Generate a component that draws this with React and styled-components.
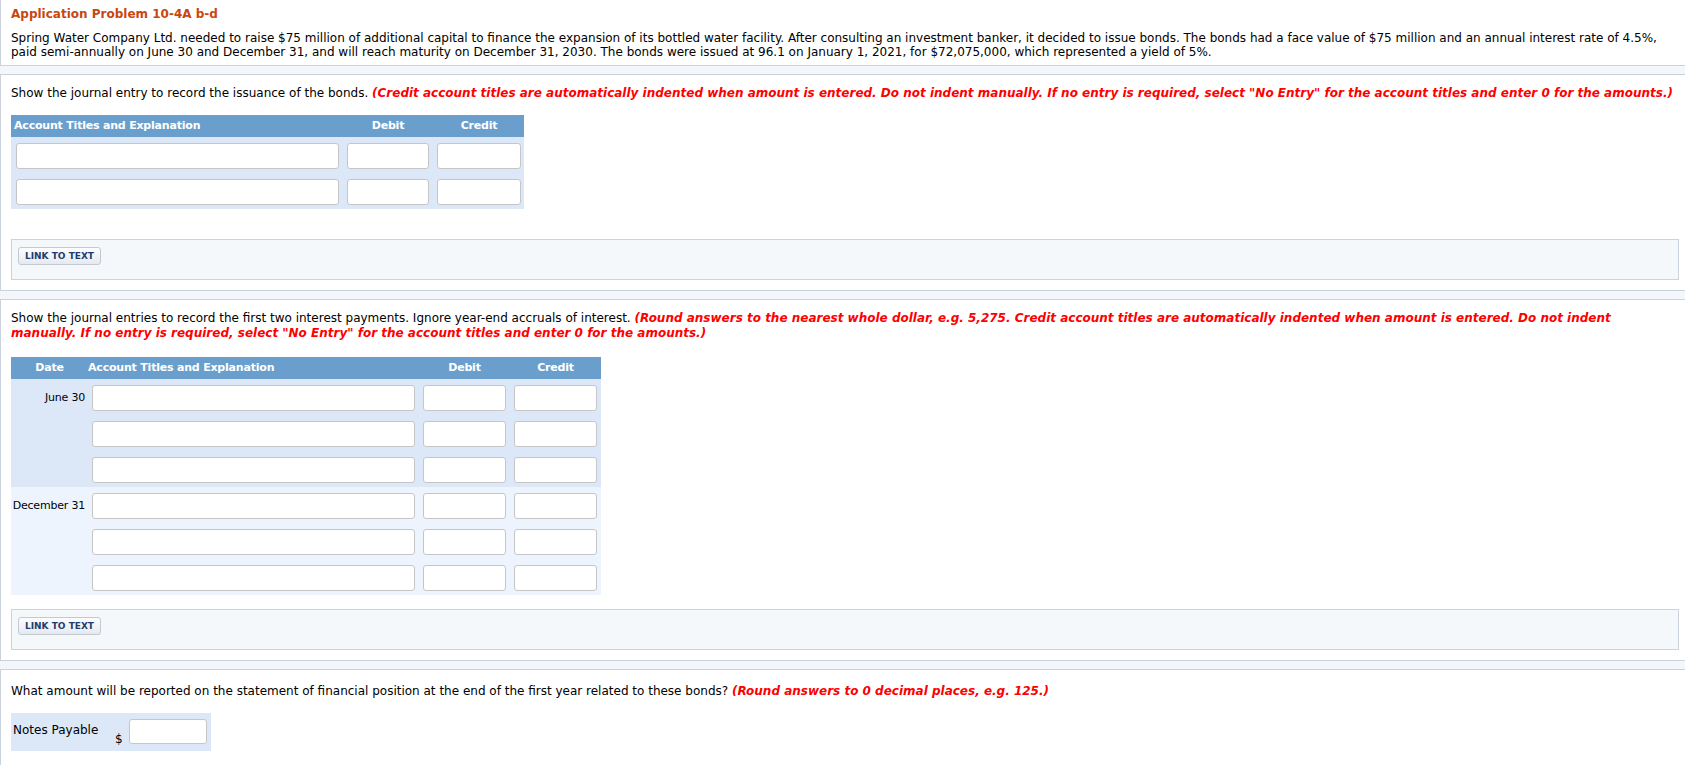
import React from 'react';
import styled, { createGlobalStyle } from 'styled-components';

const GlobalStyle = createGlobalStyle`
  html, body {
    margin: 0;
    padding: 0;
  }
  body {
    background: #f3f6fa;
    font-family: 'DejaVu Sans', Verdana, sans-serif;
    font-size: 12px;
    line-height: 14px;
    color: #000;
  }
  * {
    box-sizing: border-box;
  }
`;

const Page = styled.div`
  width: 100%;
  min-height: 765px;
  overflow: hidden;
`;

const Section = styled.section`
  background: #ffffff;
  border: 1px solid #c9d2dd;
  border-right: none;
  border-top: ${props => (props.$first ? 'none' : '1px solid #c9d2dd')};
  padding: ${props => props.$pad || '11px 6px 10px 10px'};
  margin-bottom: 8px;
`;

const Title = styled.h1`
  margin: 0 0 10px;
  font-size: 12px;
  font-weight: 700;
  line-height: 14px;
  color: #c9470e;
`;

const Paragraph = styled.p`
  margin: 0;
  line-height: ${props => props.$lh || 14}px;
  white-space: ${props => (props.$nowrap ? 'nowrap' : 'normal')};
`;

const Hint = styled.span`
  color: #ff0000;
  font-weight: 700;
  font-style: italic;
`;

const Table = styled.div`
  width: ${props => props.$width}px;
  margin-top: ${props => props.$top}px;
  margin-bottom: ${props => props.$bottom}px;
`;

const HeaderBar = styled.div`
  display: flex;
  align-items: center;
  height: 22px;
  background: #6a9fcd;
  color: #ffffff;
  font-weight: 700;
  font-size: 11px;
  letter-spacing: -0.2px;
`;

const HeadCell = styled.div`
  width: ${props => props.$w}px;
  flex: none;
  text-align: ${props => props.$align || 'center'};
  padding-left: ${props => props.$indent || 0}px;
  margin-right: ${props => props.$gap || 0}px;
`;

const Group = styled.div`
  display: flex;
  background: ${props => props.$bg};
  padding-right: ${props => props.$right}px;
  padding-left: ${props => props.$left || 0}px;
`;

const DateCell = styled.div`
  width: 81px;
  flex: none;
  padding: 12px 7px 0 0;
  text-align: right;
  font-size: 11px;
  letter-spacing: -0.2px;
`;

const Rows = styled.div`
  display: flex;
  flex-direction: column;
`;

const Row = styled.div`
  display: flex;
  gap: 8px;
  padding: 6px 0 4px;
`;

const Field = styled.input`
  width: ${props => props.$w}px;
  height: ${props => props.$h || 26}px;
  border: 1px solid #c6c6c6;
  border-radius: 3px;
  background: #ffffff;
  padding: 0 4px;
  font: inherit;
  outline: none;
  flex: none;
`;

const LinkBox = styled.div`
  border: 1px solid #cbd3dd;
  background: #f5f8fb;
  padding: 7px 6px 14px;
`;

const LinkButton = styled.button`
  height: 18px;
  padding: 0 6px;
  border: 1px solid #c2c9d2;
  border-radius: 3px;
  background: linear-gradient(#fdfdfe, #e5e9ee);
  color: #1e3d6f;
  font-family: 'DejaVu Sans', Verdana, sans-serif;
  font-size: 9px;
  font-weight: 700;
  cursor: pointer;
  display: block;
`;

const NotesBox = styled.div`
  display: flex;
  width: 200px;
  height: 38px;
  margin-top: 15px;
  background: #dce8f8;
`;

const NotesLabel = styled.div`
  width: 104px;
  padding: 10px 0 0 2px;
  flex: none;
`;

const Dollar = styled.div`
  width: 14px;
  padding-top: 19px;
  flex: none;
`;

const NotesField = styled(Field)`
  margin-top: 6px;
`;

const IssuanceTable = () => (
  <Table $width={513} $top={15} $bottom={30}>
    <HeaderBar>
      <HeadCell $w={336} $align="left" $indent={3}>Account Titles and Explanation</HeadCell>
      <HeadCell $w={82} $gap={8}>Debit</HeadCell>
      <HeadCell $w={84}>Credit</HeadCell>
    </HeaderBar>
    <Group $bg="#dce8f8" $left={5} $right={3}>
      <Rows>
        {[0, 1].map(i => (
          <Row key={i}>
            <Field $w={323} />
            <Field $w={82} />
            <Field $w={84} />
          </Row>
        ))}
      </Rows>
    </Group>
  </Table>
);

const interestGroups = [
  { date: 'June 30', bg: '#dce8f8' },
  { date: 'December 31', bg: '#edf4fd' },
];

const InterestTable = () => (
  <Table $width={590} $top={16} $bottom={14}>
    <HeaderBar>
      <HeadCell $w={77}>Date</HeadCell>
      <HeadCell $w={335} $align="left">Account Titles and Explanation</HeadCell>
      <HeadCell $w={83} $gap={8}>Debit</HeadCell>
      <HeadCell $w={83}>Credit</HeadCell>
    </HeaderBar>
    {interestGroups.map(g => (
      <Group key={g.date} $bg={g.bg} $right={4}>
        <DateCell>{g.date}</DateCell>
        <Rows>
          {[0, 1, 2].map(i => (
            <Row key={i}>
              <Field $w={323} />
              <Field $w={83} />
              <Field $w={83} />
            </Row>
          ))}
        </Rows>
      </Group>
    ))}
  </Table>
);

const App = () => (
  <Page>
    <GlobalStyle />

    <Section $first $pad="7px 0 6px 10px">
      <Title>Application Problem 10-4A b-d</Title>
      <Paragraph $nowrap>
        Spring Water Company Ltd. needed to raise $75 million of additional capital to finance the expansion of its bottled water facility. After consulting an investment banker, it decided to issue bonds. The bonds had a face value of $75 million and an annual interest rate of 4.5%,
        <br />
        paid semi-annually on June 30 and December 31, and will reach maturity on December 31, 2030. The bonds were issued at 96.1 on January 1, 2021, for $72,075,000, which represented a yield of 5%.
      </Paragraph>
    </Section>

    <Section>
      <Paragraph>
        Show the journal entry to record the issuance of the bonds.{' '}
        <Hint>
          (Credit account titles are automatically indented when amount is entered. Do not indent manually. If no entry is required, select "No Entry" for the account titles and enter 0 for the amounts.)
        </Hint>
      </Paragraph>
      <IssuanceTable />
      <LinkBox>
        <LinkButton type="button">LINK TO TEXT</LinkButton>
      </LinkBox>
    </Section>

    <Section>
      <Paragraph $lh={15}>
        Show the journal entries to record the first two interest payments. Ignore year-end accruals of interest.{' '}
        <Hint>
          (Round answers to the nearest whole dollar, e.g. 5,275. Credit account titles are automatically indented when amount is entered. Do not indent manually. If no entry is required, select "No Entry" for the account titles and enter 0 for the amounts.)
        </Hint>
      </Paragraph>
      <InterestTable />
      <LinkBox>
        <LinkButton type="button">LINK TO TEXT</LinkButton>
      </LinkBox>
    </Section>

    <Section $pad="14px 6px 16px 10px">
      <Paragraph>
        What amount will be reported on the statement of financial position at the end of the first year related to these bonds?{' '}
        <Hint>(Round answers to 0 decimal places, e.g. 125.)</Hint>
      </Paragraph>
      <NotesBox>
        <NotesLabel>Notes Payable</NotesLabel>
        <Dollar>$</Dollar>
        <NotesField $w={78} $h={25} />
      </NotesBox>
    </Section>
  </Page>
);

export default App;
